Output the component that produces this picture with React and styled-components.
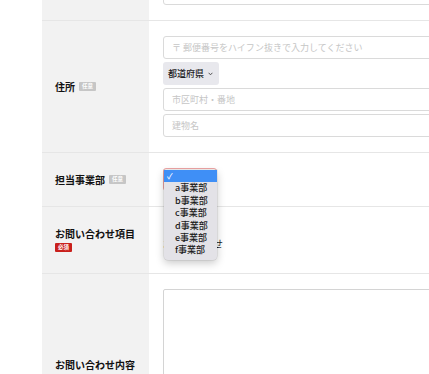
import React from 'react'
import styled, { createGlobalStyle } from 'styled-components'

const GlobalStyle = createGlobalStyle`
  html, body {
    margin: 0;
    padding: 0;
    background: #fff;
    overflow: hidden;
  }
  body {
    font-family: "Noto Sans CJK JP", "Noto Sans", sans-serif;
    color: #1a1a1a;
  }
`

const Form = styled.div`
  margin: -33px 0 0 42px;
  width: 560px;
`

const Row = styled.div`
  display: grid;
  grid-template-columns: 107px 1fr;
  border-top: ${p => (p.first ? 'none' : '1px solid #e6e6e6')};
`

const LabelCell = styled.div`
  background: #f2f2f2;
  display: flex;
  flex-direction: column;
  justify-content: center;
  align-items: flex-start;
  gap: 3px;
  padding-left: 13px;
`

const LabelLine = styled.div`
  display: flex;
  align-items: center;
  gap: 4px;
  font-size: 10px;
  font-weight: 700;
  line-height: 12px;
  color: #111;
`

const Badge = styled.span`
  display: inline-flex;
  align-items: center;
  justify-content: center;
  height: 9px;
  padding: 0 3px;
  border-radius: 1px;
  font-size: 5.5px;
  font-weight: 700;
  line-height: 1;
  color: #fff;
  background: ${p => (p.required ? '#c9201c' : '#c6c6c6')};
`

const FieldCell = styled.div`
  display: flex;
  flex-direction: column;
  gap: 3px;
  padding: ${p => p.pad || '15px 0 15px 14px'};
`

const TextInput = styled.div`
  box-sizing: border-box;
  width: 420px;
  height: 23px;
  border: 1px solid #dadada;
  border-radius: 3px;
  background: #fff;
  display: flex;
  align-items: center;
  padding-left: 8px;
  font-size: 9px;
  color: #c6c6c6;
`

const FakeSelect = styled.div`
  position: relative;
  box-sizing: border-box;
  width: ${p => p.w || 56}px;
  height: 23px;
  border-radius: 3px;
  border: ${p => (p.alert ? '1px solid #eea5a5' : 'none')};
  background: ${p => (p.alert ? '#fff' : '#e8e8ed')};
  display: flex;
  align-items: center;
  justify-content: space-between;
  padding: 0 6px 0 5px;
  font-size: 9px;
  font-weight: 500;
  color: #1d1d1f;
`

const Chevron = styled.svg`
  width: 5px;
  height: 4px;
  flex: none;
`

const Popup = styled.ul`
  position: absolute;
  top: 1px;
  left: 0px;
  z-index: 5;
  width: 53px;
  margin: 0;
  padding: 0 0 3px;
  list-style: none;
  background: #e3e2e7;
  border-radius: 0 0 4px 4px;
  box-shadow: 0 3px 9px rgba(0, 0, 0, 0.22), 0 0 0 0.5px rgba(0, 0, 0, 0.12);
`

const Option = styled.li`
  position: relative;
  height: 12.4px;
  line-height: 12.4px;
  padding-left: 11px;
  font-size: 9px;
  color: ${p => (p.active ? '#fff' : '#1c1c1c')};
  background: ${p => (p.active ? '#3f8ff6' : 'transparent')};
`

const Check = styled.span`
  position: absolute;
  left: 3px;
  top: 0;
  font-size: 8px;
  color: #fff;
`

const ChoiceText = styled.div`
  font-size: 10px;
  line-height: 14px;
  color: #1a1a1a;
`

const TextArea = styled.div`
  box-sizing: border-box;
  width: 420px;
  height: 164px;
  border: 1px solid #d4d4d4;
  border-radius: 2px;
  background: #fff;
`

const departments = ['a事業部', 'b事業部', 'c事業部', 'd事業部', 'e事業部', 'f事業部']

export default function App() {
  return (
    <>
      <GlobalStyle />
      <Form>
        <Row first>
          <LabelCell />
          <FieldCell>
            <TextInput />
          </FieldCell>
        </Row>

        <Row>
          <LabelCell>
            <LabelLine>
              住所<Badge>任意</Badge>
            </LabelLine>
          </LabelCell>
          <FieldCell>
            <TextInput>〒 郵便番号をハイフン抜きで入力してください</TextInput>
            <FakeSelect>
              都道府県
              <Chevron viewBox="0 0 5 4">
                <path d="M0.6 0.8 L2.5 2.8 L4.4 0.8" fill="none" stroke="#444" strokeWidth="0.9" />
              </Chevron>
            </FakeSelect>
            <TextInput>市区町村・番地</TextInput>
            <TextInput>建物名</TextInput>
          </FieldCell>
        </Row>

        <Row>
          <LabelCell>
            <LabelLine>
              担当事業部<Badge>任意</Badge>
            </LabelLine>
          </LabelCell>
          <FieldCell>
            <FakeSelect alert w={54}>
              <Popup>
                <Option active>
                  <Check>✓</Check>&nbsp;
                </Option>
                {departments.map(d => (
                  <Option key={d}>{d}</Option>
                ))}
              </Popup>
            </FakeSelect>
          </FieldCell>
        </Row>

        <Row>
          <LabelCell>
            <LabelLine>お問い合わせ項目</LabelLine>
            <Badge required>必須</Badge>
          </LabelCell>
          <FieldCell pad="30px 0 22px 14px">
            <ChoiceText>お問い合わせ</ChoiceText>
          </FieldCell>
        </Row>

        <Row>
          <LabelCell>
            <LabelLine>お問い合わせ内容</LabelLine>
            <Badge required>必須</Badge>
          </LabelCell>
          <FieldCell>
            <TextArea />
          </FieldCell>
        </Row>
      </Form>
    </>
  )
}
